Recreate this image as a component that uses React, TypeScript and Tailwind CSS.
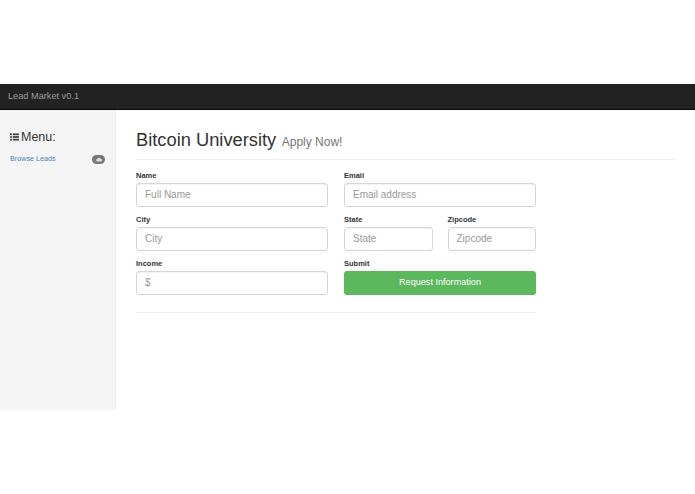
import React from "react";

function Field({ label, placeholder, className = "" }: { label: string; placeholder: string; className?: string }) {
  return (
    <div className={`flex flex-col ${className}`}>
      <label className="h-[14px] text-[7.5px] leading-[13px] font-bold text-[#333]">{label}</label>
      <input
        readOnly
        placeholder={placeholder}
        className="h-[23.5px] w-full rounded-[3px] border border-[#d6d6d6] bg-white px-[8px] text-[10px] text-[#555] shadow-[inset_0_1px_1px_rgba(0,0,0,0.05)] outline-none placeholder:text-[#999]"
      />
    </div>
  );
}

export default function App() {
  return (
    <div className="h-[494px] w-[695px] overflow-hidden bg-white font-['Liberation_Sans',Arial,sans-serif]">
      <div className="h-[84px]" />
      <nav className="flex h-[26px] items-center border-b border-[#080808] bg-[#222] pl-[8px] text-[9.2px] text-[#9d9d9d]">
        Lead Market v0.1
      </nav>
      <div className="flex h-[300px]">
        <aside className="w-[116px] shrink-0 border-r border-[#eee] bg-[#f5f5f5] pl-[10px] pr-[10px] pt-[20px]">
          <div className="flex h-[14px] items-center text-[12.5px] leading-[14px] text-[#333]">
            <svg viewBox="0 0 10 9" className="mr-[2px] h-[8px] w-[9px]" fill="#444">
              <rect x="0" y="0.5" width="2" height="2" />
              <rect x="3" y="0.5" width="7" height="2" />
              <rect x="0" y="3.5" width="2" height="2" />
              <rect x="3" y="3.5" width="7" height="2" />
              <rect x="0" y="6.5" width="2" height="2" />
              <rect x="3" y="6.5" width="7" height="2" />
            </svg>
            Menu:
          </div>
          <div className="mt-[10px] flex h-[10px] items-center justify-between">
            <a className="text-[7.2px] text-[#4a82b8]">Browse Leads</a>
            <span className="flex h-[9px] w-[13px] items-center justify-center rounded-full bg-[#777]">
              <svg viewBox="0 0 10 8" className="h-[5px] w-[6px]" fill="#ddd">
                <path d="M2.5 7.5a2.2 2.2 0 0 1-.3-4.4 2.9 2.9 0 0 1 5.5-.4 2.4 2.4 0 0 1 0 4.8z" />
              </svg>
            </span>
          </div>
        </aside>
        <main className="w-[559px] pl-[20px] pt-[19px]">
          <div className="flex h-[31px] items-baseline border-b border-[#eee] text-[#333]">
            <h1 className="text-[18.3px] leading-[22px]">Bitcoin University</h1>
            <span className="ml-[5.5px] text-[12px] text-[#777]">Apply Now!</span>
          </div>
          <form className="mt-[9px] w-[400px]">
            <div className="grid grid-cols-2 gap-x-[16px] gap-y-[6.5px]">
              <Field label="Name" placeholder="Full Name" />
              <Field label="Email" placeholder="Email address" />
              <Field label="City" placeholder="City" />
              <div className="grid grid-cols-2 gap-x-[15px]">
                <Field label="State" placeholder="State" />
                <Field label="Zipcode" placeholder="Zipcode" />
              </div>
              <Field label="Income" placeholder="$" />
              <div className="flex flex-col">
                <label className="h-[14px] text-[7.5px] leading-[13px] font-bold text-[#333]">Submit</label>
                <button
                  type="button"
                  className="h-[23.5px] w-full rounded-[3px] bg-[#5cb85c] text-[9.1px] text-white"
                >
                  Request Information
                </button>
              </div>
            </div>
            <div className="mt-[17px] border-t border-[#eee]" />
          </form>
        </main>
      </div>
    </div>
  );
}
